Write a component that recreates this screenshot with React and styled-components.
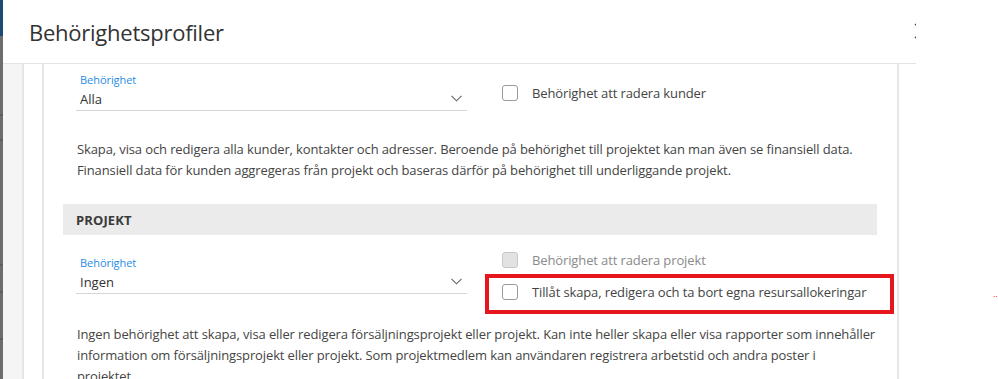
import React from "react";
import styled, { createGlobalStyle } from "styled-components";

const Global = createGlobalStyle`
  html, body { margin: 0; padding: 0; background: #ffffff; }
  body { font-family: "Open Sans", "Liberation Sans", sans-serif; color: #444; overflow: hidden; }
`;

const Page = styled.div`
  display: flex;
  width: 998px;
  height: 379px;
  overflow: hidden;
`;

const Backdrop = styled.div`
  width: 3px;
  flex: none;
  background: linear-gradient(
    #1c4a73 0 36px,
    #6d6d6d 36px 114px,
    #5e5e5e 114px 116px,
    #6d6d6d 116px 139px,
    #5e5e5e 139px 141px,
    #6d6d6d 141px 264px,
    #5e5e5e 264px 266px,
    #6d6d6d 266px 291px,
    #5e5e5e 291px 293px,
    #6d6d6d 293px 338px,
    #5e5e5e 338px 340px,
    #6d6d6d 340px
  );
`;

const Modal = styled.div`
  width: 913px;
  flex: none;
  display: flex;
  flex-direction: column;
  background: #fff;
`;

const Header = styled.div`
  height: 63px;
  flex: none;
  display: flex;
  align-items: center;
  padding-left: 26px;
  border-bottom: 1px solid #e4e4e4;
`;

const Title = styled.h1`
  margin: 0;
  font-weight: 400;
  font-size: 22px;
  color: #333;
  letter-spacing: -0.25px;
`;

const CloseClip = styled.div`
  margin-left: auto;
  width: 2px;
  height: 18px;
  overflow: hidden;
  position: relative;
  top: -1px;
`;

const Body = styled.div`
  flex: 1;
  display: flex;
  min-height: 0;
`;

const Gutter = styled.div`
  width: 19px;
  flex: none;
  background: #f5f5f5;
  border-right: 2px solid #e6e6e6;
`;

const Rail = styled.div`
  width: 18px;
  flex: none;
  border-right: 2px solid #e6e6e6;
`;

const Panel = styled.div`
  width: 853px;
  flex: none;
  border-right: 2px solid #e6e6e6;
  padding-top: 9px;
`;

const Section = styled.section`
  padding-left: 32px;
`;

const Row = styled.div`
  display: flex;
  align-items: flex-start;
`;

const Field = styled.div`
  width: 391px;
  flex: none;
`;

const Label = styled.div`
  font-size: 11px;
  line-height: 14px;
  padding-left: 4px;
  color: #1f8ce6;
  letter-spacing: -0.05px;
`;

const Select = styled.div`
  display: flex;
  align-items: center;
  justify-content: space-between;
  height: 23px;
  padding-left: 4px;
  padding-right: 5px;
  border-bottom: 1px solid #d6d6d6;
  font-size: 13px;
  color: #333;
`;

const Checks = styled.div`
  margin-left: 35px;
  margin-top: ${(p) => p.$offset}px;
  display: flex;
  flex-direction: column;
`;

const CheckRow = styled.label`
  display: flex;
  align-items: center;
  height: 20px;
  font-size: 13px;
  letter-spacing: -0.12px;
  color: ${(p) => (p.$disabled ? "#8a8a8a" : "#444")};
`;

const Box = styled.span`
  width: 14px;
  height: 14px;
  flex: none;
  border-radius: 3px;
  border: 1px solid ${(p) => (p.$disabled ? "#c8c8c8" : "#9a9a9a")};
  background: ${(p) => (p.$disabled ? "#e2e2e2" : "#fff")};
  margin-right: 14px;
`;

const Highlight = styled.div`
  box-sizing: border-box;
  margin-top: 3.5px;
  margin-left: -17px;
  width: 409px;
  height: 40px;
  border: 4px solid #e6161f;
  padding-left: 13px;
  padding-bottom: 3px;
  display: flex;
  align-items: center;
`;

const Text = styled.p`
  margin: ${(p) => p.$top}px 0 0 0;
  padding-left: 1px;
  white-space: nowrap;
  font-size: 13px;
  line-height: 21px;
  letter-spacing: -0.12px;
  color: #444;
`;

const Bar = styled.div`
  margin: 23.5px 20px 21px 19px;
  height: 31px;
  background: #ebebeb;
  display: flex;
  align-items: center;
  padding-left: 13px;
  font-size: 13px;
  font-weight: 700;
  color: #3a3a3a;
  letter-spacing: 0.1px;
`;

const Side = styled.div`
  flex: 1;
  padding: 290px 0 0 77px;
  color: #e6161f;
  font-size: 9px;
`;

const Chevron = () => (
  <svg width="11" height="7" viewBox="0 0 11 7" fill="none">
    <path d="M0.5 0.8 L5.5 5.8 L10.5 0.8" stroke="#666" strokeWidth="1.1" />
  </svg>
);

const CloseIcon = () => (
  <svg width="16" height="18" viewBox="0 0 16 18">
    <path d="M1 2 L15 16 M15 2 L1 16" stroke="#444" strokeWidth="1.3" />
  </svg>
);

const Checkbox = ({ disabled, children }) => (
  <CheckRow $disabled={disabled}>
    <Box $disabled={disabled} />
    {children}
  </CheckRow>
);

export default function App() {
  return (
    <Page>
      <Global />
      <Backdrop />
      <Modal>
        <Header>
          <Title>Behörighetsprofiler</Title>
          <CloseClip>
            <CloseIcon />
          </CloseClip>
        </Header>
        <Body>
          <Gutter />
          <Rail />
          <Panel>
            <Section>
              <Row>
                <Field>
                  <Label>Behörighet</Label>
                  <Select>
                    <span>Alla</span>
                    <Chevron />
                  </Select>
                </Field>
                <Checks $offset={10}>
                  <Checkbox>Behörighet att radera kunder</Checkbox>
                </Checks>
              </Row>
              <Text $top={27.5}>
                Skapa, visa och redigera alla kunder, kontakter och adresser. Beroende på behörighet till projektet kan man även se finansiell data.
                <br />
                Finansiell data för kunden aggregeras från projekt och baseras därför på behörighet till underliggande projekt.
              </Text>
            </Section>
            <Bar>PROJEKT</Bar>
            <Section>
              <Row>
                <Field>
                  <Label>Behörighet</Label>
                  <Select>
                    <span>Ingen</span>
                    <Chevron />
                  </Select>
                </Field>
                <Checks $offset={-6}>
                  <Checkbox disabled>Behörighet att radera projekt</Checkbox>
                  <Highlight>
                    <Checkbox>Tillåt skapa, redigera och ta bort egna resursallokeringar</Checkbox>
                  </Highlight>
                </Checks>
              </Row>
              <Text $top={10}>
                Ingen behörighet att skapa, visa eller redigera försäljningsprojekt eller projekt. Kan inte heller skapa eller visa rapporter som innehåller
                <br />
                information om försäljningsprojekt eller projekt. Som projektmedlem kan användaren registrera arbetstid och andra poster i
                <br />
                projektet.
              </Text>
            </Section>
          </Panel>
        </Body>
      </Modal>
      <Side>··</Side>
    </Page>
  );
}
